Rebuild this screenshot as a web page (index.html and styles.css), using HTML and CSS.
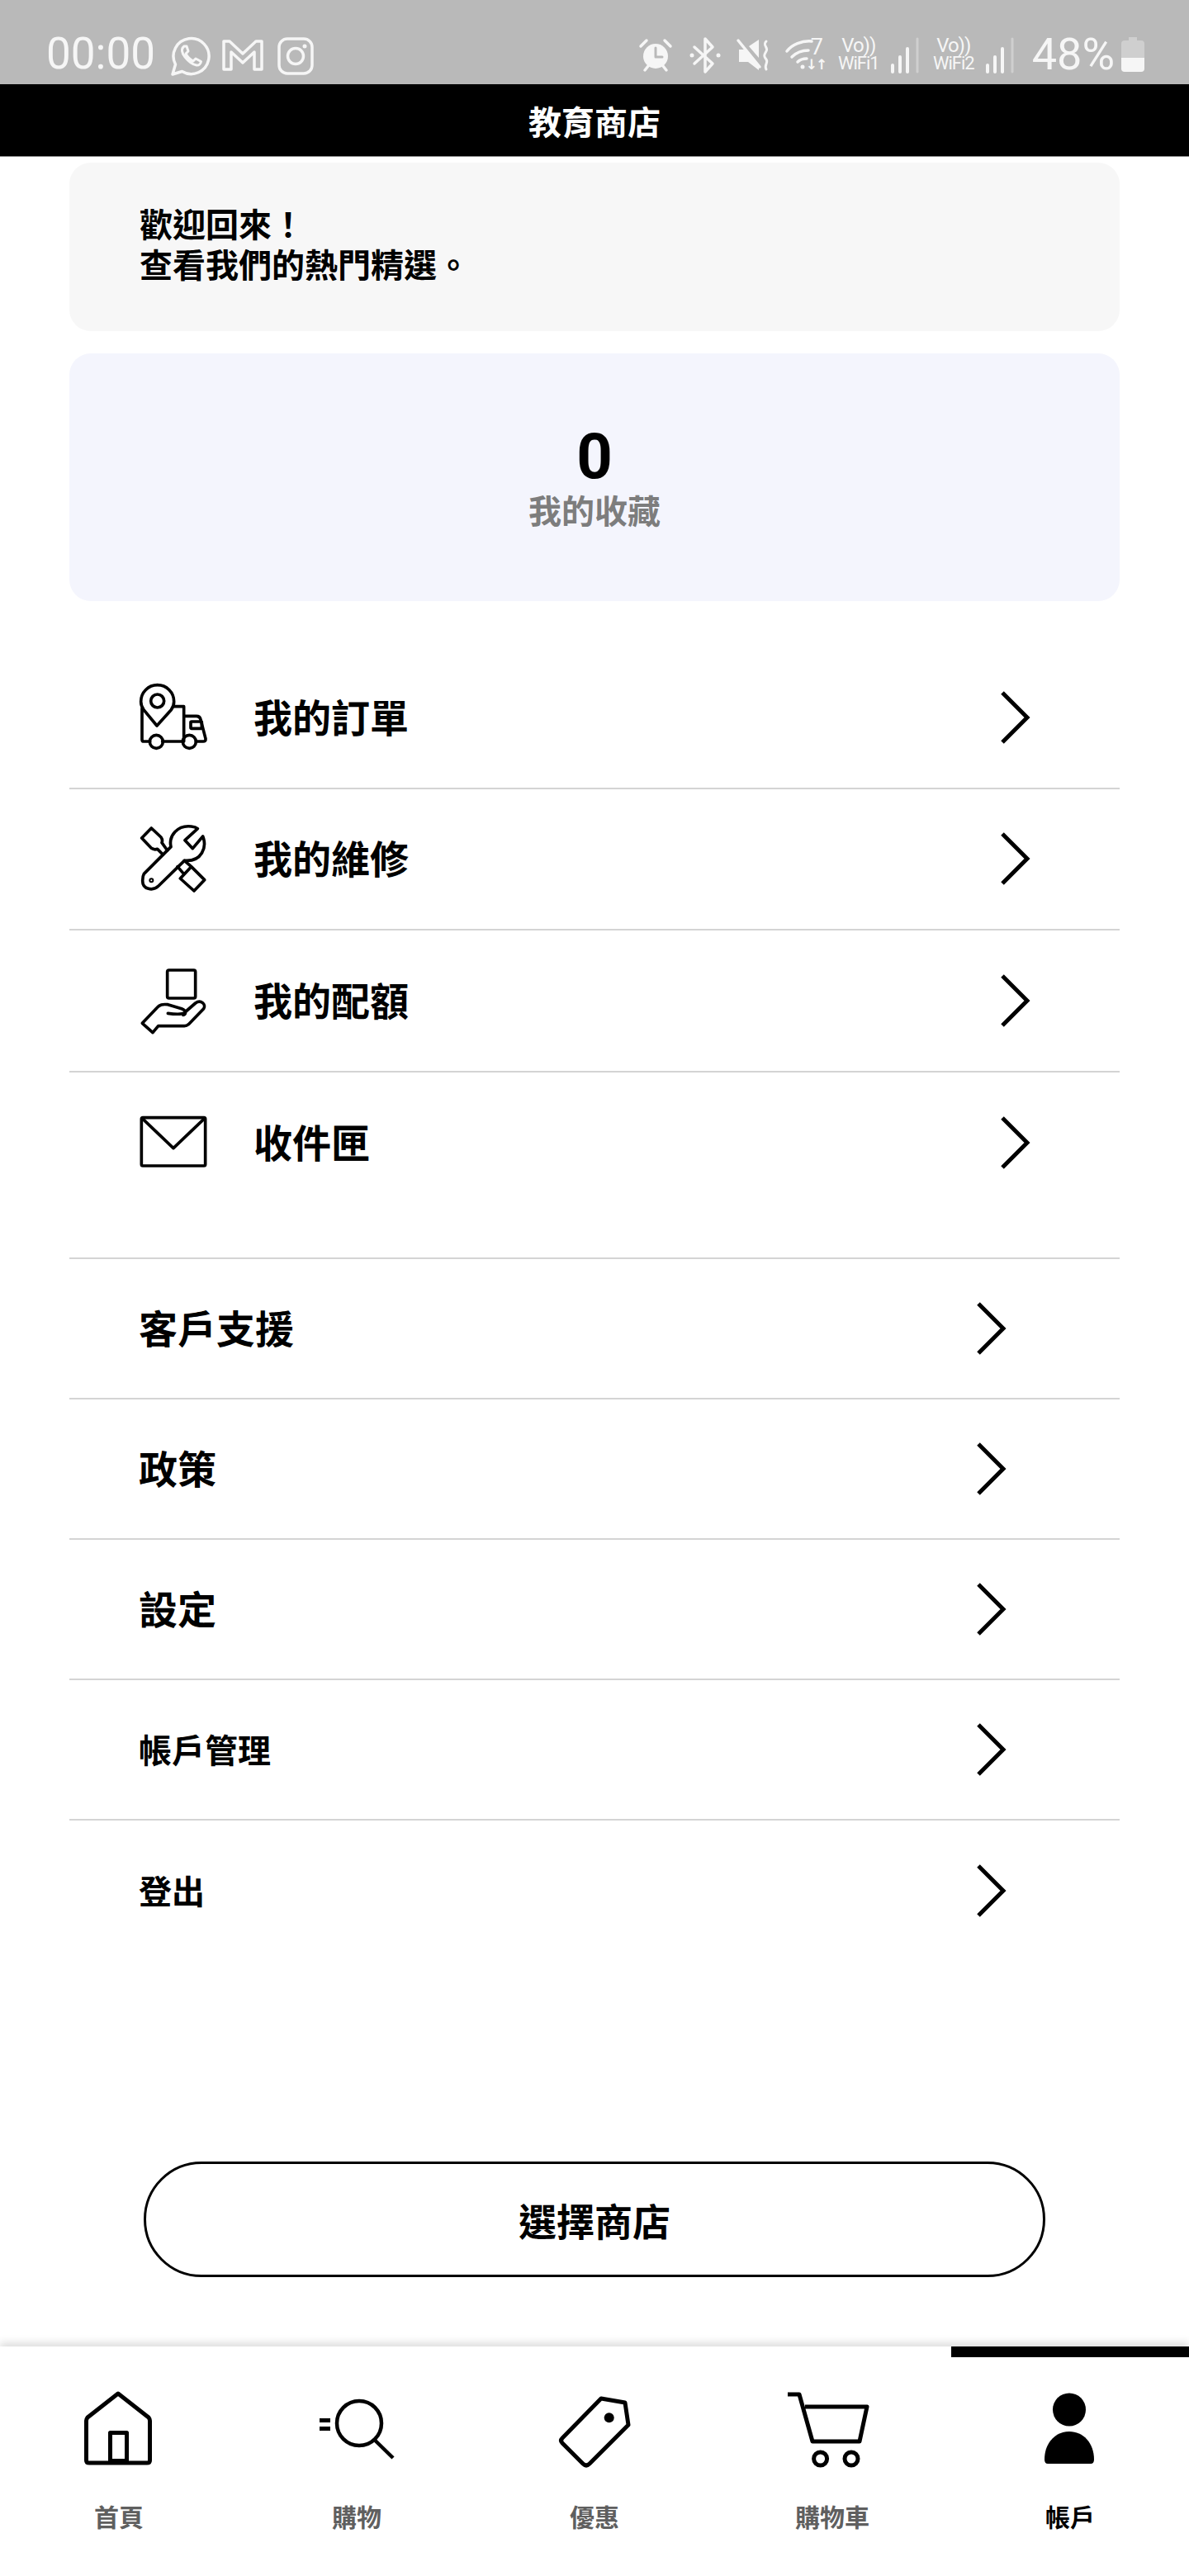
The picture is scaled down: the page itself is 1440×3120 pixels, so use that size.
FILE: index.html
```html
<!DOCTYPE html>
<html lang="zh-Hant">
<head>
<meta charset="utf-8">
<title>教育商店</title>
<link rel="stylesheet" href="styles.css">
</head>
<body>
<header class="status">
  <div class="status-left">
    <span class="time">00:00</span>
    <svg class="ic-wa" viewBox="0 0 50 50"><path class="st" d="M3 47l3.500-12A21.500 21.500 0 1 1 14.500 43.500Z"/><path class="st-thin" d="M17 13c-4 3-3 8 1 13s9 9 14 10c3 .5 5-2 5.500-4.500L31 28l-3 3c-4-2-7-5-9-9l3-3-2-6Z"/></svg>
    <svg class="ic-m" viewBox="0 0 50 40"><path class="st" d="M2 3h7l16 15L41 3h7v34h-9V16L25 29 11 16v21H2Z"/></svg>
    <svg class="ic-ig" viewBox="0 0 44 46"><rect class="st" x="2" y="2" width="40" height="42" rx="10"/><circle class="st" cx="22" cy="23" r="9.500"/><circle class="dot" cx="33" cy="11" r="2.500"/></svg>
  </div>
  <div class="status-right">
    <svg class="ic-alarm" viewBox="0 0 40 40"><circle class="dot" cx="20" cy="21" r="15"/><path class="st" d="M2 9l7-7M38 9l-7-7M7 38l4-5M33 38l-4-5"/><path class="hand" d="M20 11v11h8"/></svg>
    <svg class="ic-bt" viewBox="0 0 38 44"><path class="st" d="M6 12l22 20-9 10V2l9 10L6 32"/><circle class="dot" cx="3" cy="22" r="2.500"/><circle class="dot" cx="35" cy="22" r="2.500"/></svg>
    <svg class="ic-mute" viewBox="0 0 40 40"><path class="dot" d="M3 13h6l3 1 15 18v6L14 28H3ZM15 9L27 1v22Z"/><path class="st" d="M2 2l26 32"/><path class="st-thin" d="M36 3c-5 5 3 7 0 12s-3 6 0 10-3 6 0 12"/></svg>
    <div class="wifi">
      <svg class="ic-wifi" viewBox="0 0 34 40"><path class="st" d="M2 17C8 9 20 4 32 5M8 24c5-5 12-8 20-8M15 30c3-3 7-4 11-4"/><circle class="dot" cx="21" cy="36" r="2.500"/></svg>
      <div class="wifi-side"><span class="wifi-n">7</span><span class="wifi-arrows">↓↑</span></div>
    </div>
    <div class="vo"><span>Vo))</span><span>WiFi1</span></div>
    <svg class="ic-sig" viewBox="0 0 36 44"><path class="bars" d="M3 34v8M12 24v18M21 14v28"/><path class="bars dim" d="M33 2v40"/></svg>
    <div class="vo"><span>Vo))</span><span>WiFi2</span></div>
    <svg class="ic-sig" viewBox="0 0 36 44"><path class="bars" d="M3 34v8M12 24v18M21 14v28"/><path class="bars dim" d="M33 2v40"/></svg>
    <span class="pct">48%</span>
    <svg class="ic-batt" viewBox="0 0 28 42"><path class="dim-fill" d="M9 0h10v4h5a4 4 0 0 1 4 4v17H0V8a4 4 0 0 1 4-4h5Z"/><path class="dot" d="M0 25h28v13a4 4 0 0 1-4 4H4a4 4 0 0 1-4-4Z"/></svg>
  </div>
</header>
<div class="titlebar">教育商店</div>

<main class="main">
  <section class="welcome">歡迎回來！<br>查看我們的熱門精選。</section>
  <section class="favs">
    <div class="favs-n">0</div>
    <div class="favs-l">我的收藏</div>
  </section>

  <ul class="group group-icons">
    <li class="row">
      <svg class="row-ic" viewBox="264 84 252 252"><path class="ln" d="M276 178v112q0 7 7 7h22M350 297h74M472 297h26q10 0 9-10l-18-70q-3-12-15-12h-44M428 297V170H392"/><circle class="ln" cx="328" cy="298" r="24"/><circle class="ln" cx="448" cy="298" r="24"/><rect class="ln" x="453" y="225" width="40" height="25" rx="3"/><path class="ln-white" d="M330 240l-48-58q-10-14-10-30a60 60 0 1 1 120 0q0 16-10 30Z"/><circle class="ln" cx="332" cy="150" r="24"/></svg>
      <span class="row-t">我的訂單</span>
      <svg class="chev" viewBox="0 0 36 64"><path d="M2 2l30 30L2 62"/></svg>
    </li>
    <li class="row">
      <svg class="row-ic" viewBox="264 597 252 252"><path class="ln" d="M283 778L381 680C372 640 405 600 455 606C465 607 472 609 478 614L432 656L460 686L497 642C512 680 495 735 430 730L336 822C315 842 278 835 278 803C278 792 279 785 283 778Z"/><circle class="ln-s" cx="310" cy="802" r="6"/><path class="ln" d="M368 693L348 665Q352 655 345 645L310 612L275 648L310 685Q320 692 332 688L352 708M405 752L425 775M430 730L455 752M415 795L455 752L503 800L465 840Z"/></svg>
      <span class="row-t">我的維修</span>
      <svg class="chev" viewBox="0 0 36 64"><path d="M2 2l30 30L2 62"/></svg>
    </li>
    <li class="row">
      <svg class="row-ic" viewBox="264 210 252 252"><rect class="ln" x="368" y="225" width="102" height="102" rx="6"/><path class="ln" d="M370 382C400 386 425 386 432 378L470 345C490 330 510 350 500 365L445 422Q438 428 430 428H335L315 452L277 418L330 362C340 350 350 348 370 350L420 365C440 372 435 388 425 388"/></svg>
      <span class="row-t">我的配額</span>
      <svg class="chev" viewBox="0 0 36 64"><path d="M2 2l30 30L2 62"/></svg>
    </li>
    <li class="row">
      <svg class="row-ic" viewBox="264 729 252 252"><rect class="ln" x="274" y="764" width="232" height="175" rx="5"/><path class="ln" d="M280 770L390 875L500 770"/></svg>
      <span class="row-t">收件匣</span>
      <svg class="chev" viewBox="0 0 36 64"><path d="M2 2l30 30L2 62"/></svg>
    </li>
  </ul>

  <ul class="group group-plain">
    <li class="row"><span class="row-t">客戶支援</span><svg class="chev" viewBox="0 0 36 64"><path d="M2 2l30 30L2 62"/></svg></li>
    <li class="row"><span class="row-t">政策</span><svg class="chev" viewBox="0 0 36 64"><path d="M2 2l30 30L2 62"/></svg></li>
    <li class="row"><span class="row-t">設定</span><svg class="chev" viewBox="0 0 36 64"><path d="M2 2l30 30L2 62"/></svg></li>
    <li class="row"><span class="row-t small">帳戶管理</span><svg class="chev" viewBox="0 0 36 64"><path d="M2 2l30 30L2 62"/></svg></li>
    <li class="row"><span class="row-t small">登出</span><svg class="chev" viewBox="0 0 36 64"><path d="M2 2l30 30L2 62"/></svg></li>
  </ul>

  <button class="pick">選擇商店</button>
</main>

<nav class="nav">
  <a class="nav-i">
    <svg viewBox="-7 0 110 100"><path class="nl" d="M47 5L10 34Q8.500 36 8.500 38V86Q8.500 89 12 89H82Q85.500 89 85.500 86V38Q85.500 36 84 34Z"/><rect class="nl" x="37.500" y="52.500" width="20" height="34"/></svg>
    <span>首頁</span>
  </a>
  <a class="nav-i">
    <svg viewBox="-7 0 110 100"><circle class="nl-t" cx="51" cy="41" r="27"/><path class="nl-t" d="M70.500 62L92 83"/><path class="nk" d="M3 35h13v5H3ZM3 45h13v5H3Z"/></svg>
    <span>購物</span>
  </a>
  <a class="nav-i">
    <svg viewBox="-7 0 110 100"><path class="nl" d="M56 11L85 16L89 43L42 90Q38 94 34 90L9 65Q6 62 9 59Z"/><circle class="nk" cx="65.700" cy="34.300" r="6"/></svg>
    <span>優惠</span>
  </a>
  <a class="nav-i">
    <svg viewBox="-7 0 110 100"><path class="nl" d="M-6 6H8L24 63H81L90 21H15"/><circle class="nl" cx="33.600" cy="84" r="8"/><circle class="nl" cx="71" cy="84" r="8"/></svg>
    <span>購物車</span>
  </a>
  <a class="nav-i active">
    <svg viewBox="-7 0 110 100"><ellipse class="nk" cx="47" cy="24.500" rx="20" ry="20"/><path class="nk" d="M17 85C17 65 30 51 47 51C64 51 77 65 77 85Q77 90 73 90H21Q17 90 17 85Z"/></svg>
    <span>帳戶</span>
  </a>
</nav>
</body>
</html>
```

FILE: styles.css
```css
* { box-sizing: border-box; }
html, body { margin: 0; padding: 0; }
body {
  width: 1440px;
  height: 3120px;
  display: flex;
  flex-direction: column;
  background: #fff;
  color: #000;
  font-family: "Liberation Sans", "Noto Sans CJK TC", sans-serif;
  overflow: hidden;
}

/* status bar */
.status {
  height: 102px;
  flex: none;
  background: #b9b9b9;
  color: #f6f6f6;
  display: flex;
  justify-content: space-between;
  align-items: flex-start;
  padding: 0 54px 0 56px;
  font-family: Roboto, sans-serif;
}
.status svg { display: block; overflow: visible; flex: none; }
.st, .st-thin, .hand { fill: none; stroke: #f6f6f6; stroke-linejoin: round; stroke-linecap: round; }
.st { stroke-width: 3.5; }
.st-thin { stroke-width: 3; }
.hand { stroke: #b9b9b9; stroke-width: 3; }
.dot { fill: #f6f6f6; }
.dim-fill { fill: #cfcfcf; }
.bars { fill: none; stroke: #f6f6f6; stroke-width: 4; stroke-linecap: round; }
.bars.dim { stroke: #cfcfcf; stroke-width: 3; }

.status-left { display: flex; align-items: flex-start; padding-top: 35px; }
.time { font-size: 53px; line-height: 60px; margin-right: 18px; }
.ic-wa { width: 50px; height: 50px; margin-top: 8px; margin-right: 13px; }
.ic-m { width: 50px; height: 40px; margin-top: 12px; margin-right: 17px; }
.ic-ig { width: 44px; height: 46px; margin-top: 10px; }

.status-right { display: flex; align-items: flex-start; padding-top: 45px; }
.ic-alarm { width: 40px; height: 40px; margin-top: 2px; margin-right: 21px; }
.ic-bt { width: 38px; height: 44px; margin-right: 19px; }
.ic-mute { width: 40px; height: 40px; margin-top: 2px; margin-right: 19px; }
.wifi { display: flex; width: 58px; margin-right: 6px; position: relative; }
.ic-wifi { width: 34px; height: 40px; }
.wifi-side { display: flex; flex-direction: column; margin-left: -3px; }
.wifi-n { font-size: 27px; line-height: 24px; }
.wifi-arrows { font-size: 17px; line-height: 18px; font-family: "DejaVu Sans", sans-serif; letter-spacing: -2px; margin-left: -6px; font-weight: 700; }
.vo { display: flex; flex-direction: column; align-items: center; width: 50px; margin-right: 13px; font-size: 22px; line-height: 21px; letter-spacing: -1px; }
.vo span:first-child { font-size: 24px; }
.ic-sig { width: 36px; height: 44px; margin-right: 16px; }
.pct { font-size: 54px; line-height: 42px; margin-left: 5px; margin-right: 8px; }
.ic-batt { width: 28px; height: 42px; }

.titlebar {
  height: 88px;
  flex: none;
  background: #000;
  color: #fff;
  font-size: 40px;
  font-weight: 700;
  display: flex;
  align-items: center;
  justify-content: center;
  border-bottom: 1px solid #8a8a8a;
}

/* main */
.main {
  flex: 1;
  display: flex;
  flex-direction: column;
  padding: 7px 84px 84px;
}
.welcome {
  height: 204px;
  background: #f7f7f7;
  border-radius: 26px;
  padding: 52px 85px 0;
  font-size: 40px;
  line-height: 49px;
  font-weight: 700;
}
.favs {
  height: 300px;
  margin-top: 27px;
  background: #f4f5fd;
  border-radius: 26px;
  display: flex;
  flex-direction: column;
  align-items: center;
  padding-top: 86px;
  font-weight: 700;
}
.favs-n { font-family: Roboto, sans-serif; font-size: 76px; line-height: 78px; }
.favs-l { font-size: 40px; line-height: 50px; color: #7d7d7d; margin-top: 3px; }

.group { list-style: none; margin: 0; padding: 0; }
.group-icons { margin-top: 56px; }
.group-icons .row { height: 171.500px; padding-left: 84px; padding-right: 108px; }
.group-icons .row:last-child { border-bottom: 0; }
.row-ic { width: 84px; height: 84px; margin-right: 55px; flex: none; overflow: visible; }
.group-plain { margin-top: 53px; border-top: 2px solid #d4d4d4; }
.group-plain .row { height: 170px; padding-left: 84px; padding-right: 137px; }
.group-plain .row:last-child { border-bottom: 0; }

.row {
  display: flex;
  align-items: center;
  border-bottom: 2px solid #d4d4d4;
}
.row-t { font-size: 47px; font-weight: 700; line-height: 60px; padding-top: 4px; white-space: nowrap; }
.row-t.small { font-size: 40px; }
.chev { width: 36px; height: 64px; margin-left: auto; flex: none; overflow: visible; }
.chev path { fill: none; stroke: #000; stroke-width: 5; }

.ln, .ln-white, .ln-s { fill: none; stroke: #000; stroke-width: 11; stroke-linejoin: round; stroke-linecap: round; }
.ln-white { fill: #fff; }
.ln-s { stroke-width: 6; }

.pick {
  margin: auto 0 0 90px;
  width: 1092px;
  height: 140px;
  border: 3px solid #000;
  border-radius: 70px;
  background: #fff;
  color: #000;
  font: inherit;
  font-size: 46px;
  font-weight: 700;
  padding: 0;
}

/* bottom nav */
.nav {
  height: 278px;
  flex: none;
  display: grid;
  grid-template-columns: repeat(5, 288px);
  background: #fff;
  box-shadow: 0 -5px 9px rgba(0, 0, 0, 0.13);
  position: relative;
}
.nav-i {
  display: flex;
  flex-direction: column;
  align-items: center;
  border-top: 13px solid transparent;
  padding-top: 39px;
  color: #5f5f5f;
  font-size: 30px;
  font-weight: 700;
}
.nav-i.active { border-top-color: #000; color: #000; }
.nav-i svg { width: 110px; height: 100px; overflow: visible; display: block; }
.nav-i span { line-height: 40px; margin-top: 36px; }
.nl, .nl-t { fill: none; stroke: #000; stroke-width: 5; stroke-linejoin: round; }
.nl-t { stroke-width: 4.500; }
.nk { fill: #000; }
```
